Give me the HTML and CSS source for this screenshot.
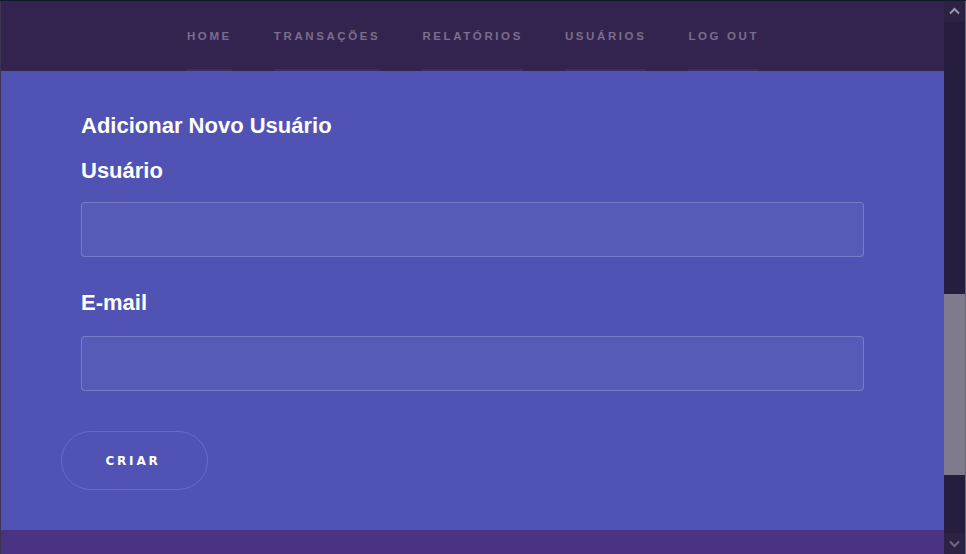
FILE: index.html
```html
<!DOCTYPE html>
<html lang="pt-BR">
<head>
<meta charset="utf-8">
<title>Adicionar Novo Usuário</title>
<link rel="stylesheet" href="styles.css">
</head>
<body>
<div class="window">
  <div class="page">
    <nav class="nav">
      <a class="nav-item" href="#">HOME</a>
      <a class="nav-item" href="#">TRANSAÇÕES</a>
      <a class="nav-item" href="#">RELATÓRIOS</a>
      <a class="nav-item" href="#">USUÁRIOS</a>
      <a class="nav-item" href="#">LOG OUT</a>
    </nav>
    <main class="content">
      <form class="form">
        <h2 class="title">Adicionar Novo Usuário</h2>
        <label class="label label-first" for="user">Usuário</label>
        <input class="field" id="user" type="text">
        <label class="label label-second" for="email">E-mail</label>
        <input class="field field-second" id="email" type="email">
        <button class="btn" type="button">CRIAR</button>
      </form>
    </main>
    <footer class="footer"></footer>
  </div>
  <div class="scrollbar">
    <div class="sb-btn">
      <svg width="21" height="21" viewBox="0 0 21 21"><polyline points="6,12.5 10.5,8 15,12.5" fill="none" stroke="#9b95aa" stroke-width="2"/></svg>
    </div>
    <div class="sb-track">
      <div class="sb-space-top"></div>
      <div class="sb-thumb"></div>
      <div class="sb-space-bottom"></div>
    </div>
    <div class="sb-btn">
      <svg width="21" height="21" viewBox="0 0 21 21"><polyline points="6,8.5 10.5,13 15,8.5" fill="none" stroke="#6f6884" stroke-width="2"/></svg>
    </div>
  </div>
</div>
</body>
</html>
```
FILE: styles.css
```css
html, body {
  margin: 0;
  padding: 0;
  height: 554px;
  overflow: hidden;
  background: #271e3f;
}

.window {
  display: flex;
  height: 553px;
  border-top: 1px solid #0f1a2a;
}

.page {
  width: 943px;
  border-left: 1px solid #3b3552;
  display: flex;
  flex-direction: column;
}

.nav {
  height: 70px;
  background: #33244f;
  display: flex;
  justify-content: center;
  align-items: stretch;
  gap: 42px;
  padding-left: 1px;
  box-sizing: border-box;
}

.nav-item {
  display: flex;
  align-items: center;
  padding-top: 2px;
  font-family: "Liberation Sans", Arial, sans-serif;
  font-weight: bold;
  font-size: 11.5px;
  letter-spacing: 2.6px;
  color: #7b6d8e;
  text-decoration: none;
  border-bottom: 2px solid #3b2b66;
  box-sizing: border-box;
}

.content {
  height: 459px;
  background: #5052b4;
  box-sizing: border-box;
  padding: 42px 80px 0 60px;
}

.form {
  display: flex;
  flex-direction: column;
  align-items: flex-start;
}

.title {
  margin: 0 0 0 20px;
  font-family: "Liberation Sans", Arial, sans-serif;
  font-weight: bold;
  font-size: 22px;
  line-height: 26px;
  color: #ffffff;
}

.label {
  margin-left: 20px;
  font-family: "Liberation Sans", Arial, sans-serif;
  font-weight: bold;
  font-size: 22px;
  line-height: 26px;
  color: #ffffff;
}

.label-first {
  margin-top: 19px;
}

.label-second {
  margin-top: 33px;
}

.field {
  margin: 18px 0 0 20px;
  width: 783px;
  height: 55px;
  box-sizing: border-box;
  background: rgba(255, 255, 255, 0.05);
  border: 1px solid rgba(255, 255, 255, 0.2);
  border-radius: 4px;
  outline: none;
  padding: 0 14px;
  color: #ffffff;
  font-size: 16px;
}

.field-second {
  margin-top: 20px;
}

.btn {
  margin-top: 40px;
  width: 147px;
  height: 59px;
  box-sizing: border-box;
  background: transparent;
  border: 1px solid rgba(255, 255, 255, 0.15);
  border-radius: 30px;
  color: #ffffff;
  font-family: "DejaVu Sans", Verdana, sans-serif;
  font-weight: bold;
  font-size: 12px;
  letter-spacing: 2.8px;
  padding: 1px 3px 0 0;
  cursor: pointer;
}

.footer {
  height: 24px;
  background: #4a3382;
}

.scrollbar {
  width: 21px;
  border-right: 1px solid #6b6878;
  display: flex;
  flex-direction: column;
  background: #271e3f;
}

.sb-btn {
  height: 21px;
  background: #2b2244;
  display: flex;
  align-items: center;
  justify-content: center;
}

.sb-track {
  flex: 1;
  display: flex;
  flex-direction: column;
}

.sb-space-top {
  height: 272px;
}

.sb-thumb {
  height: 181px;
  background: #7f7a8c;
}

.sb-space-bottom {
  flex: 1;
}
```
